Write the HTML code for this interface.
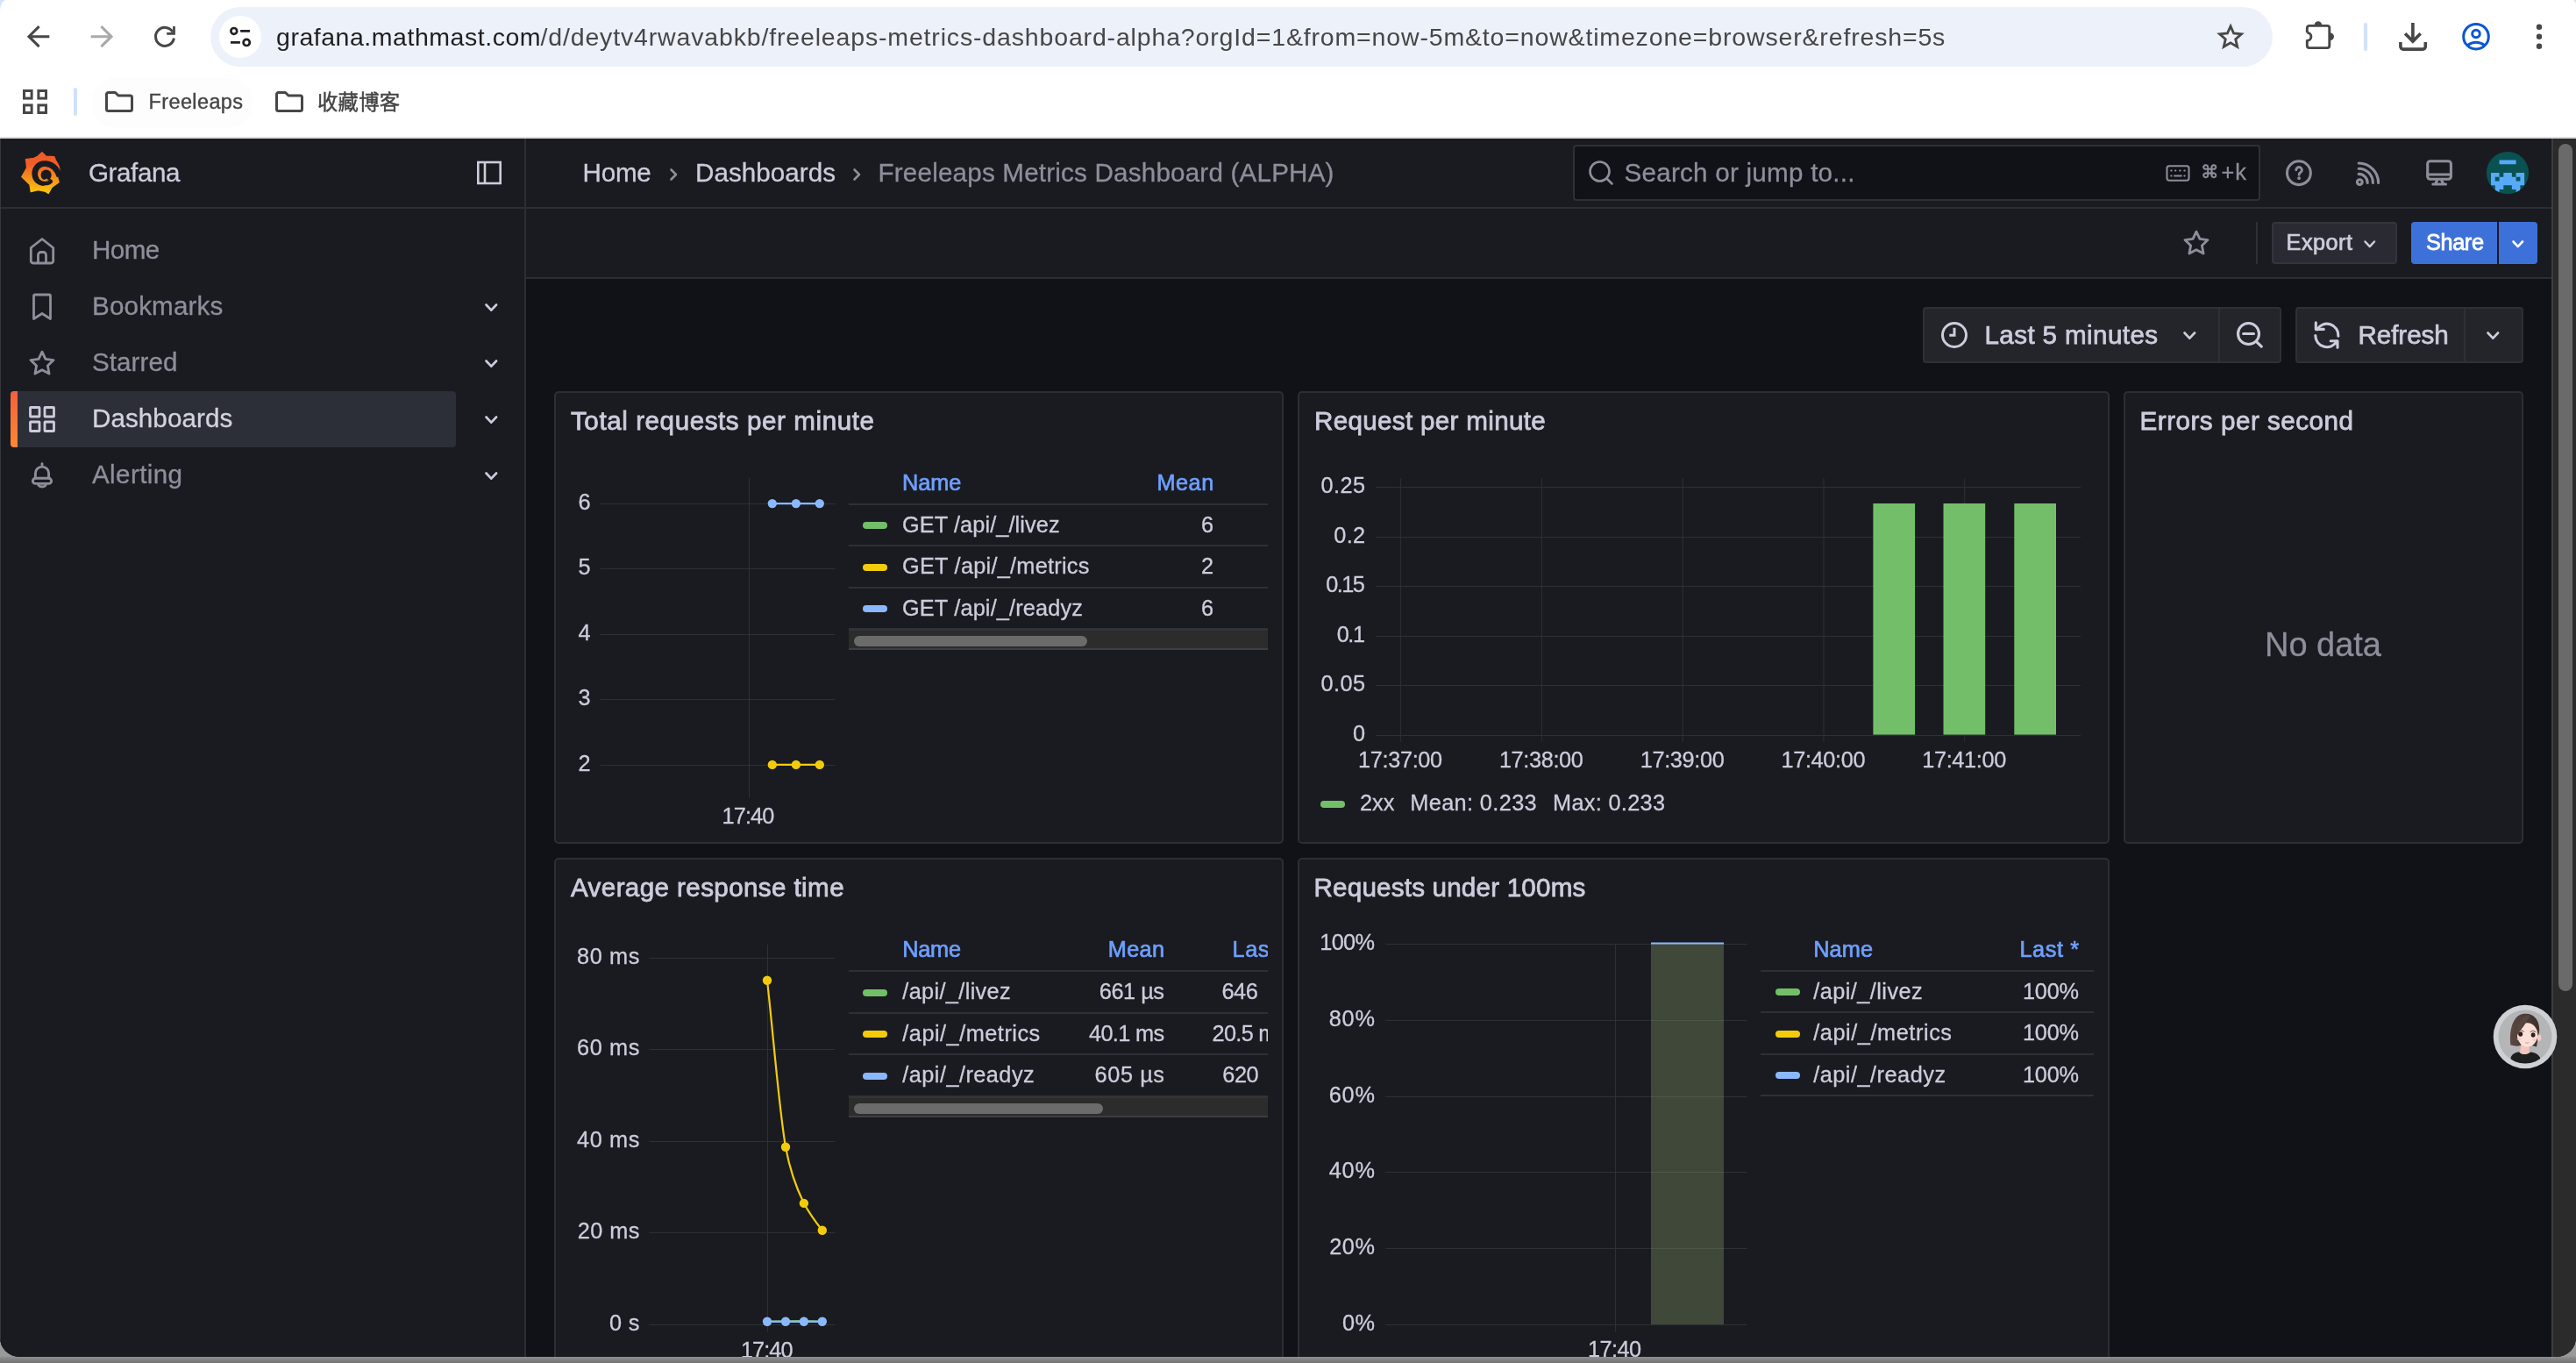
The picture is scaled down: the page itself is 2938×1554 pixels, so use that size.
<!DOCTYPE html>
<html lang="en">
<head>
<meta charset="utf-8">
<title>Freeleaps Metrics Dashboard (ALPHA) - Dashboards - Grafana</title>
<style>

*{box-sizing:border-box;margin:0;padding:0}
html,body{width:2938px;height:1554px;overflow:hidden}
body{background:linear-gradient(#9a9a9a 0,#9a9a9a 1546px,#8a8a8a 1548px,#737373 1554px);font-family:"Liberation Sans", "Noto Sans CJK SC", sans-serif;-webkit-font-smoothing:antialiased}
.t{position:absolute;white-space:pre;display:block}
.abs{position:absolute}
svg{position:absolute;overflow:visible}
#win{will-change:transform;position:absolute;left:0;top:0;width:2938px;height:1547px;overflow:hidden;border-radius:0 0 22px 22px;background:#111217}


#chrome{position:absolute;left:0;top:0;width:2938px;height:158px;background:#fff;border-bottom:2px solid #dcdcdc}
#chrome .corner{position:absolute;left:0;top:0;width:2938px;height:14px;background:#d3e3fd}
#chrome .cornerw{position:absolute;left:0;top:0;width:2938px;height:30px;background:#fff;border-radius:7px 4px 0 0/13px 6px 0 0}
#omni{position:absolute;left:240px;top:8px;width:2352px;height:68px;border-radius:34px;background:#edf1fa}
#omni .site{position:absolute;left:10px;top:10px;width:48px;height:48px;border-radius:24px;background:#fff}
.bsep{position:absolute;width:4px;border-radius:2px;background:#d1e1fc}

#sidebar{position:absolute;left:0;top:158px;width:600px;height:1396px;background:#1a1b20;border-right:2px solid #2d2e35;border-left:1px solid #35373c}
#sidehead{position:absolute;left:0;top:0;width:598px;height:80px;border-bottom:2px solid #2d2e35}
#navsel{position:absolute;left:11px;top:288px;width:508px;height:64px;border-radius:4px;background:#2d2f38;overflow:hidden}
#navsel:before{content:"";position:absolute;left:0;top:0;width:8px;height:64px;background:linear-gradient(#f55f3e,#ff8833)}
#topbar{position:absolute;left:600px;top:158px;width:2310px;height:80px;background:#1a1b20;border-bottom:2px solid #2d2e35}
#toolbar2{position:absolute;left:600px;top:238px;width:2310px;height:80px;background:#1a1b20;border-bottom:2px solid #2d2e35}
#search{position:absolute;left:1794px;top:165px;width:784px;height:64px;border:2px solid #2f3037;border-radius:4px;background:#111217}
.btn{position:absolute;border-radius:4px;background:#24252b;border:2px solid #2f3037}
.vsep{position:absolute;width:2px;background:#2f3037}
#vscroll{position:absolute;left:2910px;top:158px;width:28px;height:1396px;background:#2b2b2b;border-left:2px solid #3d3d3d}
#vscroll i{position:absolute;left:6px;top:6px;width:16px;height:966px;border-radius:8px;background:#6a6a6a}

.panel{position:absolute;background:#1a1b20;border:2px solid #2d2e35;border-radius:5px}
.hl{position:absolute;height:2px;background:#2f3037}
.sw{position:absolute;width:28px;height:8px;border-radius:4px}
.hsb{position:absolute;height:24px;background:#2c2c2c;border-bottom:2px solid #3f3f3f;border-top:2px solid #333437}
.hsb i{position:absolute;left:6px;top:6px;height:12px;border-radius:6px;background:#6b6b6b}

</style>
</head>
<body>
<div id="win">

<div id="chrome">
  <div class="corner"></div><div class="cornerw"></div>
  <!-- back / forward / reload -->
  <svg style="left:28px;top:26px" width="32" height="32" viewBox="0 0 32 32" fill="none" stroke="#474747" stroke-width="3.1" stroke-linejoin="miter">
    <path d="M28.3 15.7H6M16.6 4.2 5 15.7l11.6 11.5"/></svg>
  <svg style="left:100px;top:26px" width="32" height="32" viewBox="0 0 32 32" fill="none" stroke="#a9a9a9" stroke-width="3.1">
    <path d="M3.7 15.7H26M15.4 4.2 27 15.7 15.4 27.2"/></svg>
  <svg style="left:0;top:0" width="240" height="80" viewBox="0 0 240 80" fill="none" stroke="#474747" stroke-width="3">
    <path d="M197 36.400A10.500 10.500 0 1 0 198.400 43.500"/><path d="M198.500 29.900V38.300H190.200" stroke-width="2.800"/></svg>
  <div id="omni"><div class="site"></div>
    <svg style="left:14px;top:14px" width="40" height="40" viewBox="0 0 40 40" fill="none" stroke="#222" stroke-width="2.700">
      <circle cx="12.800" cy="13.400" r="3.400"/><path d="M20.100 13.400H31M9 26.400H19.900"/><circle cx="27.200" cy="26.400" r="3.600"/></svg>
    <!-- bookmark star -->
    <svg style="left:2288px;top:18px" width="32" height="32" viewBox="0 0 24 24" fill="none" stroke="#474747" stroke-width="2.1" stroke-linejoin="miter">
      <path d="M12 2.900l2.700 6.100 6.600.600-5 4.400 1.500 6.500L12 17.100l-5.800 3.400 1.500-6.500-5-4.400 6.600-.600z"/></svg>
  </div>
  <!-- extensions puzzle -->
  <svg style="left:2627px;top:22px" width="38" height="38" viewBox="0 0 38 38" fill="none" stroke="#474747" stroke-width="2.900" stroke-linejoin="round">
    <path d="M4.300 15.200V9.900a2.500 2.500 0 0 1 2.500-2.500H27.300a2.500 2.500 0 0 1 2.500 2.500V30.100a2.500 2.500 0 0 1-2.500 2.500H6.800a2.500 2.500 0 0 1-2.500-2.500V24.400A4.600 4.600 0 0 0 4.300 15.200"/>
    <path stroke="none" fill="#474747" d="M12.700 6.500A4.200 4.200 0 0 1 21.100 6.500ZM30.800 15.600A4.200 4.200 0 0 1 30.800 24Z"/></svg>
  <div class="bsep" style="left:2696px;top:26px;height:32px"></div>
  <!-- download -->
  <svg style="left:2734px;top:24px" width="36" height="36" viewBox="0 0 36 36" fill="none" stroke="#474747" stroke-width="3.600">
    <path d="M17.900 1.900V22M9.100 14.300 17.900 23.100 26.700 14.300M3.900 24.100v5a3 3 0 0 0 3 3h22.400a3 3 0 0 0 3-3v-5"/></svg>
  <!-- profile -->
  <svg style="left:2806px;top:24px" width="36" height="36" viewBox="0 0 36 36" fill="none" stroke="#0b57d0" stroke-width="3">
    <circle cx="18" cy="17.700" r="14.300"/><circle cx="18" cy="14.500" r="4.300"/><path d="M8.500 27.500c5.500-4.300 13.500-4.300 19 0"/></svg>
  <svg style="left:2890px;top:25px" width="12" height="34" viewBox="0 0 12 34" fill="#474747">
    <circle cx="6" cy="5.700" r="3.200"/><circle cx="6" cy="16.700" r="3.200"/><circle cx="6" cy="27.800" r="3.200"/></svg>
  <!-- bookmarks bar -->
  <div class="abs" style="left:104px;top:88px;width:185px;height:58px;border-radius:29px;background:#fdfdfe"></div>
  <svg style="left:26px;top:102px" width="28" height="28" viewBox="0 0 28 28" fill="none" stroke="#474747" stroke-width="3">
    <rect x="1.500" y="1.500" width="8.600" height="8.600"/><rect x="17.900" y="1.500" width="8.600" height="8.600"/>
    <rect x="1.500" y="17.900" width="8.600" height="8.600"/><rect x="17.900" y="17.900" width="8.600" height="8.600"/></svg>
  <div class="bsep" style="left:84px;top:100px;height:32px"></div>
  <svg style="left:120px;top:104px" width="32" height="24" viewBox="0 0 32 24" fill="none" stroke="#474747" stroke-width="3" stroke-linejoin="round">
    <path d="M1.500 3.500a2 2 0 0 1 2-2h8l3.500 3.500h13.500a2 2 0 0 1 2 2v13.500a2 2 0 0 1-2 2h-25a2 2 0 0 1-2-2z"/></svg>
  <svg style="left:314px;top:104px" width="32" height="24" viewBox="0 0 32 24" fill="none" stroke="#474747" stroke-width="3" stroke-linejoin="round">
    <path d="M1.500 3.500a2 2 0 0 1 2-2h8l3.500 3.500h13.500a2 2 0 0 1 2 2v13.500a2 2 0 0 1-2 2h-25a2 2 0 0 1-2-2z"/></svg>
  <span class="t" style="left:315.0px;top:23.5px;font-size:28.5px;line-height:37px;color:#1f1f1f;letter-spacing:0.53px;">grafana.mathmast.com</span>
<span class="t" style="left:616.5px;top:23.5px;font-size:28.5px;line-height:37px;color:#474747;letter-spacing:0.84px;">/d/deytv4rwavabkb/freeleaps-metrics-dashboard-alpha?orgId=1&amp;from=now-5m&amp;to=now&amp;timezone=browser&amp;refresh=5s</span>
<span class="t" style="left:169.5px;top:100.8px;font-size:23.5px;line-height:31px;color:#444444;letter-spacing:0.38px;-webkit-text-stroke:0.35px #444444;">Freeleaps</span>
<span class="t" style="left:362.0px;top:101.5px;font-size:23.3px;line-height:30px;color:#444444;letter-spacing:0.27px;-webkit-text-stroke:0.45px #444444;">收藏博客</span>
</div>


<div id="sidebar">
  <div id="sidehead"></div>
  <div id="navsel"></div>
</div>
<div id="topbar"></div>
<div id="toolbar2"></div>
<div id="search"></div>
<svg style="left:10px;top:160px" width="80" height="70" viewBox="0 0 1558 1363">
<defs><linearGradient id="lg" gradientUnits="userSpaceOnUse" x1="0" y1="250" x2="0" y2="1190"><stop offset="0" stop-color="#f05a28"/><stop offset=".3" stop-color="#f15c27"/><stop offset="1" stop-color="#fccb0a"/></linearGradient></defs>
<path fill="url(#lg)" stroke="url(#lg)" stroke-width="26" stroke-linejoin="round" d="M740 268 822 352 1008 362 1040 445C1100 520 1128 600 1132 697L1078 800 1112 928 958 1040 880 1178 800 1130 650 1100 492 1140 468 985 288 810 402 610 378 422 560 397 640 357Z"/>
<path fill="none" stroke="#1a1b20" stroke-width="128" stroke-linecap="butt" d="M1128 800C1085 670 1000 522 800 516 650 514 576 640 578 745 581 870 670 948 790 950"/>
<path fill="none" stroke="#1a1b20" stroke-width="88" stroke-linecap="round" d="M790 956C850 958 900 945 932 912"/>
<circle cx="830" cy="772" r="118" fill="#1a1b20"/>
<path fill="none" stroke="#1a1b20" stroke-width="46" d="M890 850 930 900"/>
<path fill="none" stroke="#f5901d" stroke-width="34" stroke-linecap="round" d="M690 845C735 895 800 900 848 868"/>
</svg>
<!-- dock toggle -->
<svg style="left:543px;top:183px" width="30" height="28" viewBox="0 0 30 28" fill="none" stroke="#ccccdc" stroke-width="2.600"><rect x="2.300" y="2" width="25.400" height="24"/><path d="M10 2v24"/></svg>
<!-- nav icons -->
<svg style="left:32px;top:269px" width="32" height="34" viewBox="0 0 32 34" fill="none" stroke="#8e8e9b" stroke-width="2.800" stroke-linejoin="round"><path d="M3.300 13.500 16 3.500l12.700 10v15a2.500 2.500 0 0 1-2.500 2.500H5.800a2.500 2.500 0 0 1-2.500-2.500z"/><path d="M11.500 31V21.500a3 3 0 0 1 3-3h3a3 3 0 0 1 3 3V31"/></svg>
<svg style="left:34px;top:333px" width="28" height="34" viewBox="0 0 28 34" fill="none" stroke="#8e8e9b" stroke-width="2.800" stroke-linejoin="round"><path d="M4.500 4.500a1.500 1.500 0 0 1 1.500-1.500h16a1.500 1.500 0 0 1 1.500 1.500v26L14 24.500 4.500 30.500z"/></svg>
<svg style="left:31px;top:397px" width="34" height="34" viewBox="0 0 24 24" fill="none" stroke="#8e8e9b" stroke-width="2" stroke-linejoin="round"><path d="M12 2.900l2.800 5.900 6.400.800-4.700 4.500 1.200 6.400L12 17.400l-5.700 3.100 1.200-6.400L2.800 9.600l6.400-.800z"/></svg>
<svg style="left:32px;top:462px" width="32" height="32" viewBox="0 0 32 32" fill="none" stroke="#ccccdc" stroke-width="2.800"><rect x="2.500" y="2.500" width="10.500" height="10.500" rx=".5"/><rect x="19" y="2.500" width="10.500" height="10.500" rx=".5"/><rect x="2.500" y="19" width="10.500" height="10.500" rx=".5"/><rect x="19" y="19" width="10.500" height="10.500" rx=".5"/></svg>
<svg style="left:33px;top:524px" width="30" height="36" viewBox="0 0 30 36" fill="none" stroke="#8e8e9b" stroke-width="2.900" stroke-linecap="round" stroke-linejoin="round"><path d="M15 4.600v1.900M7.400 21V15.700a7.600 7.600 0 0 1 15.200 0V21"/><rect x="4.400" y="21.300" width="21.200" height="6.100" rx="3"/><path d="M10.900 29.300a4.400 2.700 0 0 0 8.200 0"/></svg>
<svg style="left:552.8px;top:346.4px" width="14.6" height="9.2" viewBox="0 0 14.6 9.2" fill="none" stroke="#ccccdc" stroke-width="2.7" stroke-linecap="round" stroke-linejoin="round"><path d="M1.500 1.500 7.30 7.70 13.10 1.500"/></svg><svg style="left:552.8px;top:410.4px" width="14.6" height="9.2" viewBox="0 0 14.6 9.2" fill="none" stroke="#ccccdc" stroke-width="2.7" stroke-linecap="round" stroke-linejoin="round"><path d="M1.500 1.500 7.30 7.70 13.10 1.500"/></svg><svg style="left:552.8px;top:474.4px" width="14.6" height="9.2" viewBox="0 0 14.6 9.2" fill="none" stroke="#ccccdc" stroke-width="2.7" stroke-linecap="round" stroke-linejoin="round"><path d="M1.500 1.500 7.30 7.70 13.10 1.500"/></svg><svg style="left:552.8px;top:538.4px" width="14.6" height="9.2" viewBox="0 0 14.6 9.2" fill="none" stroke="#ccccdc" stroke-width="2.7" stroke-linecap="round" stroke-linejoin="round"><path d="M1.500 1.500 7.30 7.70 13.10 1.500"/></svg>
<svg style="left:763.0px;top:189.0px" width="12" height="20" viewBox="0 0 12 20" fill="none" stroke="#8e8e9b" stroke-width="2.600" stroke-linecap="round" stroke-linejoin="round"><path d="M2.500 4.500 8 10 2.500 15.500"/></svg><svg style="left:972.0px;top:189.0px" width="12" height="20" viewBox="0 0 12 20" fill="none" stroke="#8e8e9b" stroke-width="2.600" stroke-linecap="round" stroke-linejoin="round"><path d="M2.500 4.500 8 10 2.500 15.500"/></svg>
<!-- search icon / keyboard -->
<svg style="left:1811px;top:182px" width="30" height="30" viewBox="0 0 30 30" fill="none" stroke="#8e8e9b" stroke-width="2.600" stroke-linecap="round"><circle cx="13.500" cy="13.500" r="11"/><path d="M21.500 21.500 27.500 27.500"/></svg>
<svg style="left:2468.500px;top:187.500px" width="30" height="19" viewBox="0 0 32 22" fill="none" stroke="#8e8e9b" stroke-width="2.400" stroke-linecap="round"><rect x="1.500" y="1.500" width="29" height="19" rx="3"/><path d="M7 7.500h.5M12.500 7.500h.500M18.500 7.500h.500M24.500 7.500h.500M7 14.500h.500M11.500 14.500h9M24.500 14.500h.500"/></svg>
<!-- help, rss, monitor -->
<svg style="left:2605px;top:180px" width="34" height="34" viewBox="0 0 34 34" fill="none" stroke="#8e8e9b" stroke-width="3.100" stroke-linecap="round"><circle cx="16.900" cy="17.200" r="13.400"/><path stroke-width="2.900" d="M13.800 13.800a3.300 3.300 0 1 1 5 2.800c-1.300.800-1.700 1.300-1.700 2.600"/><circle cx="17.100" cy="23.200" r="1.900" fill="#8e8e9b" stroke="none"/></svg>
<svg style="left:2685px;top:183px" width="32" height="32" viewBox="0 0 32 32" fill="none" stroke="#8e8e9b" stroke-width="3.100" stroke-linecap="round"><circle cx="6.300" cy="24.600" r="2.900"/><path d="M5.200 15.400A10 10 0 0 1 15.200 25.400M5.200 9.200A16.200 16.200 0 0 1 21.400 25.400M5.200 3A22.400 22.400 0 0 1 27.600 25.400"/></svg>
<svg style="left:2765px;top:180px" width="34" height="34" viewBox="0 0 34 34" fill="none" stroke="#8e8e9b" stroke-width="3.100" stroke-linecap="round" stroke-linejoin="round"><rect x="3.700" y="3.700" width="26.700" height="20.600" rx="3"/><path d="M3.700 19H30.400M14.400 26 12.600 29.600M19.900 26 21.700 29.600M9.800 30H24.500"/></svg>
<svg style="left:0;top:0" width="2938" height="300"><defs><clipPath id="avc"><circle cx="2860" cy="197.100" r="24.100"/></clipPath></defs><circle cx="2860" cy="197.100" r="24.100" fill="#0a5152"/><path clip-path="url(#avc)" fill="#57aaf9" d="M2841.00 196.95h4.77v4.77h-4.77zM2845.77 196.95h4.77v4.77h-4.77zM2855.31 196.95h4.77v4.77h-4.77zM2860.08 196.95h4.77v4.77h-4.77zM2869.62 196.95h4.77v4.77h-4.77zM2874.39 196.95h4.77v4.77h-4.77zM2841.00 201.72h4.77v4.77h-4.77zM2850.54 201.72h4.77v4.77h-4.77zM2855.31 201.72h4.77v4.77h-4.77zM2860.08 201.72h4.77v4.77h-4.77zM2864.85 201.72h4.77v4.77h-4.77zM2874.39 201.72h4.77v4.77h-4.77zM2841.00 206.49h4.77v4.77h-4.77zM2845.77 206.49h4.77v4.77h-4.77zM2850.54 206.49h4.77v4.77h-4.77zM2855.31 206.49h4.77v4.77h-4.77zM2860.08 206.49h4.77v4.77h-4.77zM2864.85 206.49h4.77v4.77h-4.77zM2869.62 206.49h4.77v4.77h-4.77zM2874.39 206.49h4.77v4.77h-4.77zM2845.77 211.26h4.77v4.77h-4.77zM2850.54 211.26h4.77v4.77h-4.77zM2864.85 211.26h4.77v4.77h-4.77zM2869.62 211.26h4.77v4.77h-4.77zM2845.77 216.03h4.77v4.77h-4.77zM2869.62 216.03h4.77v4.77h-4.77zM2850.54 182.60h19.08v4.77h-19.08z"/></svg>
<!-- toolbar 2 -->
<svg style="left:2488px;top:260px" width="34" height="34" viewBox="0 0 24 24" fill="none" stroke="#8e8e9b" stroke-width="2" stroke-linejoin="round"><path d="M12 2.900l2.800 5.900 6.400.800-4.700 4.500 1.200 6.400L12 17.400l-5.700 3.100 1.200-6.400L2.800 9.600l6.400-.800z"/></svg>
<div class="vsep" style="left:2573px;top:253px;height:48px"></div>
<div class="btn" style="left:2591px;top:253px;width:143px;height:48px;background:#2a2b32;border-color:#34353c"></div>
<svg style="left:2696.0px;top:273.7px" width="13.5" height="8.6" viewBox="0 0 13.5 8.6" fill="none" stroke="#ccccdc" stroke-width="2.5" stroke-linecap="round" stroke-linejoin="round"><path d="M1.500 1.500 6.75 7.10 12.00 1.500"/></svg>
<div class="abs" style="left:2750px;top:253px;width:98px;height:48px;border-radius:4px 0 0 4px;background:#3d71d9"></div>
<div class="abs" style="left:2850px;top:253px;width:44px;height:48px;border-radius:0 4px 4px 0;background:#3d71d9"></div>
<svg style="left:2864.5px;top:273.7px" width="13.5" height="8.6" viewBox="0 0 13.5 8.6" fill="none" stroke="#ffffff" stroke-width="2.6" stroke-linecap="round" stroke-linejoin="round"><path d="M1.500 1.500 6.75 7.10 12.00 1.500"/></svg>
<!-- time controls -->
<div class="btn" style="left:2193px;top:350px;width:409px;height:64px"></div>
<div class="vsep" style="left:2530px;top:352px;height:60px"></div>
<svg style="left:2212px;top:365px" width="34" height="34" viewBox="0 0 34 34" fill="none" stroke="#ccccdc" stroke-width="3"><circle cx="17" cy="17" r="13.500"/><path d="M17 8.800V17.300H11.300"/></svg>
<svg style="left:2489.5px;top:377.6px" width="14.6" height="9.2" viewBox="0 0 14.6 9.2" fill="none" stroke="#ccccdc" stroke-width="2.7" stroke-linecap="round" stroke-linejoin="round"><path d="M1.500 1.500 7.30 7.70 13.10 1.500"/></svg>
<svg style="left:2549px;top:365px" width="34" height="34" viewBox="0 0 34 34" fill="none" stroke="#ccccdc" stroke-width="3.100" stroke-linecap="round"><circle cx="15.500" cy="15.500" r="12"/><path d="M24.300 24.300 30.300 30.200M9.600 15.500H21.500"/></svg>
<div class="btn" style="left:2618px;top:350px;width:260px;height:64px"></div>
<div class="vsep" style="left:2810px;top:352px;height:60px"></div>
<svg style="left:2637px;top:365px" width="34" height="34" viewBox="0 0 34 34" fill="none" stroke="#ccccdc" stroke-width="3.100" stroke-linecap="round" stroke-linejoin="round"><path d="M5.600 10.800A13 13 0 0 1 29.900 18.100M4.300 2.900V10.400H13.300M3.800 17.500A13 13 0 0 0 28.400 23.600M21.200 23.800H29V31.300"/></svg>
<svg style="left:2835.5px;top:377.6px" width="14.6" height="9.2" viewBox="0 0 14.6 9.2" fill="none" stroke="#ccccdc" stroke-width="2.7" stroke-linecap="round" stroke-linejoin="round"><path d="M1.500 1.500 7.30 7.70 13.10 1.500"/></svg>
<div id="vscroll"><i></i></div>
<svg style="left:2843px;top:1145px" width="74" height="74" viewBox="0 0 74 74">
<defs><clipPath id="fc"><circle cx="37" cy="37" r="30.500"/></clipPath>
<linearGradient id="hg" x1="0" y1="0" x2="1" y2="0"><stop offset="0" stop-color="#5a4741"/><stop offset="1" stop-color="#3f302d"/></linearGradient></defs>
<circle cx="37" cy="37" r="36.300" fill="#cfd0d3"/><circle cx="37" cy="37" r="30.500" fill="#b4b5b7"/>
<g clip-path="url(#fc)">
<path d="M20.400 46.500C18.500 30 23 12 35.500 10.800 47 9.500 53.500 18 53.200 30L50 48.500 41 46 27 47.800Z" fill="url(#hg)"/>
<path d="M32.300 45h9l.800 10c-3 3.500-8.500 3.500-11 0z" fill="#f2c6ba"/>
<ellipse cx="39.600" cy="34.800" rx="11.700" ry="13.600" fill="#fbe0d8"/>
<path d="M42.700 12.500C36 11 25.500 20 26.300 42 27 33.500 32.500 29.500 36 24 38.500 20 41 16 42.700 12.500Z" fill="#554640"/>
<path d="M42.700 12.500C48 14 52 20 52.600 33 51 27 47 20.500 42.700 12.500Z" fill="#43332f"/>
<ellipse cx="53.100" cy="38.200" rx="2.300" ry="3.800" fill="#f4cbbf"/>
<ellipse cx="31.700" cy="34" rx="2.500" ry="2.700" fill="#2e1e1c"/><ellipse cx="46.100" cy="35" rx="2.400" ry="2.700" fill="#2e1e1c"/>
<path d="M27.800 31.200c2.500-2 5.500-2 8 .200M42.500 31.800c2.500-2 5-1.800 7 .200" stroke="#5a4741" stroke-width="1" fill="none"/>
<ellipse cx="30" cy="39.500" rx="2.600" ry="1.600" fill="#f6c3ba" opacity=".7"/><ellipse cx="47.500" cy="40.300" rx="2.400" ry="1.600" fill="#f6c3ba" opacity=".7"/>
<path d="M36.600 43c1.700.900 3.700.900 5.400 0-1 2.200-4.400 2.200-5.400 0z" fill="#e08f84"/>
<path d="M20.500 61c1.500-4.500 5-5.800 9.200-6.800 3.500 3.800 9.500 3.800 13.200.200 4.500.600 9 1.600 11.300 6.800L52 70H22Z" fill="#1c1e1f"/>
</g></svg>
<span class="t" style="left:101.0px;top:177.7px;font-size:29.6px;line-height:38px;color:#ccccdc;letter-spacing:-0.41px;-webkit-text-stroke:0.3px #ccccdc;">Grafana</span>
<span class="t" style="left:105.0px;top:266.2px;font-size:29.6px;line-height:38px;color:#8e8e9b;letter-spacing:-0.55px;-webkit-text-stroke:0.3px #8e8e9b;">Home</span>
<span class="t" style="left:105.0px;top:330.2px;font-size:29.6px;line-height:38px;color:#8e8e9b;letter-spacing:0.16px;-webkit-text-stroke:0.3px #8e8e9b;">Bookmarks</span>
<span class="t" style="left:105.0px;top:394.2px;font-size:29.6px;line-height:38px;color:#8e8e9b;letter-spacing:0.06px;-webkit-text-stroke:0.3px #8e8e9b;">Starred</span>
<span class="t" style="left:105.0px;top:458.2px;font-size:29.6px;line-height:38px;color:#d2d2e0;letter-spacing:0.07px;-webkit-text-stroke:0.3px #d2d2e0;">Dashboards</span>
<span class="t" style="left:105.0px;top:522.2px;font-size:29.6px;line-height:38px;color:#8e8e9b;letter-spacing:0.38px;-webkit-text-stroke:0.3px #8e8e9b;">Alerting</span>
<span class="t" style="left:664.5px;top:177.7px;font-size:29.6px;line-height:38px;color:#ccccdc;letter-spacing:-0.22px;-webkit-text-stroke:0.3px #ccccdc;">Home</span>
<span class="t" style="left:793.0px;top:177.7px;font-size:29.6px;line-height:38px;color:#ccccdc;letter-spacing:0.05px;-webkit-text-stroke:0.3px #ccccdc;">Dashboards</span>
<span class="t" style="left:1001.5px;top:177.7px;font-size:29.6px;line-height:38px;color:#8e8e9b;letter-spacing:0.20px;-webkit-text-stroke:0.3px #8e8e9b;">Freeleaps Metrics Dashboard (ALPHA)</span>
<span class="t" style="left:1852.5px;top:177.7px;font-size:29.6px;line-height:38px;color:#8e8e9b;letter-spacing:0.25px;-webkit-text-stroke:0.3px #8e8e9b;">Search or jump to...</span>
<span class="t" style="left:2510.0px;top:183.2px;font-size:20.5px;line-height:27px;color:#8e8e9b;-webkit-text-stroke:0.5px #8e8e9b;font-family:'DejaVu Sans', sans-serif;">⌘</span>
<span class="t" style="left:2533.5px;top:180.2px;font-size:25.3px;line-height:33px;color:#8e8e9b;letter-spacing:1.08px;-webkit-text-stroke:0.3px #8e8e9b;">+k</span>
<span class="t" style="left:2607.6px;top:259.7px;font-size:25.3px;line-height:33px;color:#ccccdc;letter-spacing:0.46px;-webkit-text-stroke:0.7px #ccccdc;">Export</span>
<span class="t" style="left:2767.0px;top:259.7px;font-size:25.3px;line-height:33px;color:#ffffff;letter-spacing:-0.38px;-webkit-text-stroke:0.8px #ffffff;">Share</span>
<span class="t" style="left:2263.5px;top:363.1px;font-size:29.6px;line-height:38px;color:#ccccdc;letter-spacing:0.39px;-webkit-text-stroke:0.75px #ccccdc;">Last 5 minutes</span>
<span class="t" style="left:2689.5px;top:363.1px;font-size:29.6px;line-height:38px;color:#ccccdc;letter-spacing:-0.07px;-webkit-text-stroke:0.75px #ccccdc;">Refresh</span>


<div class="panel" style="left:632px;top:446px;width:832px;height:516px"></div>
<div class="panel" style="left:1480px;top:446px;width:926px;height:516px"></div>
<div class="panel" style="left:2422px;top:446px;width:456px;height:516px"></div>
<div class="panel" style="left:632px;top:978px;width:832px;height:620px"></div>
<div class="panel" style="left:1480px;top:978px;width:926px;height:620px"></div>
<svg style="left:0;top:0" width="2938" height="1554" viewBox="0 0 2938 1554" fill="none">
<path d="M684.5 574.5H952.5" stroke="#2d3035" stroke-width="1"/>
<path d="M684.5 648.5H952.5" stroke="#2d3035" stroke-width="1"/>
<path d="M684.5 723.5H952.5" stroke="#2d3035" stroke-width="1"/>
<path d="M684.5 797.5H952.5" stroke="#2d3035" stroke-width="1"/>
<path d="M684.5 872.5H952.5" stroke="#2d3035" stroke-width="1"/>
<path d="M854.5 544.5V909.5" stroke="#2d3035" stroke-width="1"/>
<path d="M880.8 574.1 907.9 574.1 934.8 574.1" fill="none" stroke="#8ab8ff" stroke-width="2.2"/>
<circle cx="880.8" cy="574.1" r="5.2" fill="#8ab8ff"/>
<circle cx="907.9" cy="574.1" r="5.2" fill="#8ab8ff"/>
<circle cx="934.8" cy="574.1" r="5.2" fill="#8ab8ff"/>
<path d="M880.8 871.9 907.9 871.9 934.8 871.9" fill="none" stroke="#f2cc0c" stroke-width="2.2"/>
<circle cx="880.8" cy="871.9" r="5.2" fill="#f2cc0c"/>
<circle cx="907.9" cy="871.9" r="5.2" fill="#f2cc0c"/>
<circle cx="934.8" cy="871.9" r="5.2" fill="#f2cc0c"/>
<path d="M1569.0 555.5H2373.0" stroke="#2d3035" stroke-width="1"/>
<path d="M1569.0 612.5H2373.0" stroke="#2d3035" stroke-width="1"/>
<path d="M1569.0 668.5H2373.0" stroke="#2d3035" stroke-width="1"/>
<path d="M1569.0 725.5H2373.0" stroke="#2d3035" stroke-width="1"/>
<path d="M1569.0 781.5H2373.0" stroke="#2d3035" stroke-width="1"/>
<path d="M1569.0 838.5H2373.0" stroke="#2d3035" stroke-width="1"/>
<path d="M1597.6 545.0V846.0" stroke="#2d3035" stroke-width="1"/>
<path d="M1758.4 545.0V846.0" stroke="#2d3035" stroke-width="1"/>
<path d="M1919.2 545.0V846.0" stroke="#2d3035" stroke-width="1"/>
<path d="M2080.0 545.0V846.0" stroke="#2d3035" stroke-width="1"/>
<path d="M2240.7 545.0V846.0" stroke="#2d3035" stroke-width="1"/>
<rect x="2136.4" y="574" width="47.700" height="263.600" fill="#73bf69"/>
<rect x="2216.5" y="574" width="47.700" height="263.600" fill="#73bf69"/>
<rect x="2297.3" y="574" width="47.700" height="263.600" fill="#73bf69"/>
<path d="M740.5 1092.5H952.5" stroke="#2d3035" stroke-width="1"/>
<path d="M740.5 1196.5H952.5" stroke="#2d3035" stroke-width="1"/>
<path d="M740.5 1301.5H952.5" stroke="#2d3035" stroke-width="1"/>
<path d="M740.5 1405.5H952.5" stroke="#2d3035" stroke-width="1"/>
<path d="M740.5 1510.5H952.5" stroke="#2d3035" stroke-width="1"/>
<path d="M875.5 1077.0V1518.5" stroke="#2d3035" stroke-width="1"/>
<path d="M875 1117.8C882 1180 888 1260 896 1307.8 901 1335 909 1356 916.9 1371.9 924 1385 931 1394 937.8 1402.8" fill="none" stroke="#f2cc0c" stroke-width="2.2"/>
<circle cx="875.0" cy="1117.8" r="5.2" fill="#f2cc0c"/>
<circle cx="896.0" cy="1307.8" r="5.2" fill="#f2cc0c"/>
<circle cx="916.9" cy="1371.9" r="5.2" fill="#f2cc0c"/>
<circle cx="937.8" cy="1402.8" r="5.2" fill="#f2cc0c"/>
<path d="M875.0 1506.6 896.0 1506.3 916.9 1506.2 937.8 1506.6" fill="none" stroke="#73bf69" stroke-width="2.2"/>
<circle cx="875.0" cy="1506.6" r="4.5" fill="#73bf69"/>
<circle cx="896.0" cy="1506.3" r="4.5" fill="#73bf69"/>
<circle cx="916.9" cy="1506.2" r="4.5" fill="#73bf69"/>
<circle cx="937.8" cy="1506.6" r="4.5" fill="#73bf69"/>
<path d="M875.0 1506.8 896.0 1506.8 916.9 1506.8 937.8 1506.8" fill="none" stroke="#8ab8ff" stroke-width="2.2"/>
<circle cx="875.0" cy="1506.8" r="5.2" fill="#8ab8ff"/>
<circle cx="896.0" cy="1506.8" r="5.2" fill="#8ab8ff"/>
<circle cx="916.9" cy="1506.8" r="5.2" fill="#8ab8ff"/>
<circle cx="937.8" cy="1506.8" r="5.2" fill="#8ab8ff"/>
<path d="M1580.5 1076.5H1992.5" stroke="#2d3035" stroke-width="1"/>
<path d="M1580.5 1163.5H1992.5" stroke="#2d3035" stroke-width="1"/>
<path d="M1580.5 1250.5H1992.5" stroke="#2d3035" stroke-width="1"/>
<path d="M1580.5 1336.5H1992.5" stroke="#2d3035" stroke-width="1"/>
<path d="M1580.5 1423.5H1992.5" stroke="#2d3035" stroke-width="1"/>
<path d="M1580.5 1510.5H1992.5" stroke="#2d3035" stroke-width="1"/>
<path d="M1842.5 1076.0V1518.5" stroke="#2d3035" stroke-width="1"/>
<rect x="1883" y="1075.500" width="83" height="434.500" fill="#73bf69" fill-opacity=".1"/>
<rect x="1883" y="1075.500" width="83" height="434.500" fill="#f2cc0c" fill-opacity=".1"/>
<rect x="1883" y="1075.500" width="83" height="434.500" fill="#8ab8ff" fill-opacity=".1"/>
<path d="M1883 1075.500H1966" stroke="#8ab8ff" stroke-width="2.200"/>
</svg>
<div class="hl" style="left:968.0px;top:573.7px;width:478.0px"></div>
<div class="sw" style="left:984.0px;top:595.1px;background:#73bf69"></div>
<div class="hl" style="left:968.0px;top:621.2px;width:478.0px"></div>
<div class="sw" style="left:984.0px;top:642.6px;background:#f2cc0c"></div>
<div class="hl" style="left:968.0px;top:668.7px;width:478.0px"></div>
<div class="sw" style="left:984.0px;top:690.1px;background:#8ab8ff"></div>
<div class="hl" style="left:968.0px;top:716.2px;width:478.0px"></div>
<div class="hsb" style="left:968.0px;top:717.0px;width:478.0px"><i style="width:266.0px"></i></div>
<div class="sw" style="left:1506.400px;top:912.500px;background:#73bf69"></div>
<div class="hl" style="left:968.0px;top:1106.3px;width:478.0px"></div>
<div class="sw" style="left:984.0px;top:1127.7px;background:#73bf69"></div>
<div class="hl" style="left:968.0px;top:1153.8px;width:478.0px"></div>
<div class="sw" style="left:984.0px;top:1175.2px;background:#f2cc0c"></div>
<div class="hl" style="left:968.0px;top:1201.3px;width:478.0px"></div>
<div class="sw" style="left:984.0px;top:1222.7px;background:#8ab8ff"></div>
<div class="hl" style="left:968.0px;top:1248.8px;width:478.0px"></div>
<div class="hsb" style="left:968.0px;top:1249.6px;width:478.0px"><i style="width:283.5px"></i></div>
<div class="hl" style="left:2008.0px;top:1105.8px;width:380.0px"></div>
<div class="sw" style="left:2024.5px;top:1127.2px;background:#73bf69"></div>
<div class="hl" style="left:2008.0px;top:1153.3px;width:380.0px"></div>
<div class="sw" style="left:2024.5px;top:1174.7px;background:#f2cc0c"></div>
<div class="hl" style="left:2008.0px;top:1200.8px;width:380.0px"></div>
<div class="sw" style="left:2024.5px;top:1222.2px;background:#8ab8ff"></div>
<div class="hl" style="left:2008.0px;top:1248.3px;width:380.0px"></div>
<span class="t" style="left:651.0px;top:461.2px;font-size:29.6px;line-height:38px;color:#ccccdc;letter-spacing:0.57px;-webkit-text-stroke:0.8px #ccccdc;">Total requests per minute</span>
<span class="t" style="left:1499.0px;top:461.2px;font-size:29.6px;line-height:38px;color:#ccccdc;letter-spacing:0.32px;-webkit-text-stroke:0.8px #ccccdc;">Request per minute</span>
<span class="t" style="left:2440.5px;top:461.2px;font-size:29.6px;line-height:38px;color:#ccccdc;letter-spacing:0.52px;-webkit-text-stroke:0.8px #ccccdc;">Errors per second</span>
<span class="t" style="left:651.0px;top:993.2px;font-size:29.6px;line-height:38px;color:#ccccdc;letter-spacing:0.39px;-webkit-text-stroke:0.8px #ccccdc;">Average response time</span>
<span class="t" style="left:1498.5px;top:993.2px;font-size:29.6px;line-height:38px;color:#ccccdc;letter-spacing:0.20px;-webkit-text-stroke:0.8px #ccccdc;">Requests under 100ms</span>
<span class="t" style="left:2583.0px;top:711.2px;font-size:38px;line-height:49px;color:#8e8e9b;letter-spacing:-0.02px;-webkit-text-stroke:0.3px #8e8e9b;">No data</span>
<span class="t" style="left:659.4px;top:556.4px;font-size:25.3px;line-height:33px;color:#ccccdc;-webkit-text-stroke:0.3px #ccccdc;">6</span>
<span class="t" style="left:659.4px;top:630.4px;font-size:25.3px;line-height:33px;color:#ccccdc;-webkit-text-stroke:0.3px #ccccdc;">5</span>
<span class="t" style="left:659.4px;top:705.4px;font-size:25.3px;line-height:33px;color:#ccccdc;-webkit-text-stroke:0.3px #ccccdc;">4</span>
<span class="t" style="left:659.4px;top:779.4px;font-size:25.3px;line-height:33px;color:#ccccdc;-webkit-text-stroke:0.3px #ccccdc;">3</span>
<span class="t" style="left:659.4px;top:854.4px;font-size:25.3px;line-height:33px;color:#ccccdc;-webkit-text-stroke:0.3px #ccccdc;">2</span>
<span class="t" style="left:823.5px;top:913.8px;font-size:25.3px;line-height:33px;color:#ccccdc;letter-spacing:-0.85px;-webkit-text-stroke:0.3px #ccccdc;">17:40</span>
<span class="t" style="left:1029.0px;top:533.6px;font-size:25.3px;line-height:33px;color:#6e9fff;letter-spacing:-0.03px;-webkit-text-stroke:0.7px #6e9fff;">Name</span>
<span class="t" style="left:1319.4px;top:533.6px;font-size:25.3px;line-height:33px;color:#6e9fff;letter-spacing:0.51px;-webkit-text-stroke:0.7px #6e9fff;">Mean</span>
<span class="t" style="left:1029.0px;top:581.8px;font-size:25.3px;line-height:33px;color:#ccccdc;letter-spacing:0.10px;-webkit-text-stroke:0.3px #ccccdc;">GET /api/_/livez</span>
<span class="t" style="left:1370.1px;top:581.8px;font-size:25.3px;line-height:33px;color:#ccccdc;-webkit-text-stroke:0.3px #ccccdc;">6</span>
<span class="t" style="left:1029.0px;top:629.3px;font-size:25.3px;line-height:33px;color:#ccccdc;letter-spacing:0.26px;-webkit-text-stroke:0.3px #ccccdc;">GET /api/_/metrics</span>
<span class="t" style="left:1370.1px;top:629.3px;font-size:25.3px;line-height:33px;color:#ccccdc;-webkit-text-stroke:0.3px #ccccdc;">2</span>
<span class="t" style="left:1029.0px;top:676.8px;font-size:25.3px;line-height:33px;color:#ccccdc;letter-spacing:0.16px;-webkit-text-stroke:0.3px #ccccdc;">GET /api/_/readyz</span>
<span class="t" style="left:1370.1px;top:676.8px;font-size:25.3px;line-height:33px;color:#ccccdc;-webkit-text-stroke:0.3px #ccccdc;">6</span>
<span class="t" style="left:1506.4px;top:536.9px;font-size:25.3px;line-height:33px;color:#ccccdc;letter-spacing:0.45px;-webkit-text-stroke:0.3px #ccccdc;">0.25</span>
<span class="t" style="left:1521.3px;top:593.9px;font-size:25.3px;line-height:33px;color:#ccccdc;letter-spacing:0.26px;-webkit-text-stroke:0.3px #ccccdc;">0.2</span>
<span class="t" style="left:1512.2px;top:649.9px;font-size:25.3px;line-height:33px;color:#ccccdc;letter-spacing:-1.50px;-webkit-text-stroke:0.3px #ccccdc;">0.15</span>
<span class="t" style="left:1524.8px;top:706.9px;font-size:25.3px;line-height:33px;color:#ccccdc;letter-spacing:-1.50px;-webkit-text-stroke:0.3px #ccccdc;">0.1</span>
<span class="t" style="left:1506.4px;top:762.9px;font-size:25.3px;line-height:33px;color:#ccccdc;letter-spacing:0.45px;-webkit-text-stroke:0.3px #ccccdc;">0.05</span>
<span class="t" style="left:1542.9px;top:819.9px;font-size:25.3px;line-height:33px;color:#ccccdc;-webkit-text-stroke:0.3px #ccccdc;">0</span>
<span class="t" style="left:1549.1px;top:849.8px;font-size:25.3px;line-height:33px;color:#ccccdc;letter-spacing:-0.35px;-webkit-text-stroke:0.3px #ccccdc;">17:37:00</span>
<span class="t" style="left:1709.9px;top:849.8px;font-size:25.3px;line-height:33px;color:#ccccdc;letter-spacing:-0.35px;-webkit-text-stroke:0.3px #ccccdc;">17:38:00</span>
<span class="t" style="left:1870.7px;top:849.8px;font-size:25.3px;line-height:33px;color:#ccccdc;letter-spacing:-0.35px;-webkit-text-stroke:0.3px #ccccdc;">17:39:00</span>
<span class="t" style="left:2031.5px;top:849.8px;font-size:25.3px;line-height:33px;color:#ccccdc;letter-spacing:-0.35px;-webkit-text-stroke:0.3px #ccccdc;">17:40:00</span>
<span class="t" style="left:2192.2px;top:849.8px;font-size:25.3px;line-height:33px;color:#ccccdc;letter-spacing:-0.35px;-webkit-text-stroke:0.3px #ccccdc;">17:41:00</span>
<span class="t" style="left:1551.0px;top:899.0px;font-size:25.3px;line-height:33px;color:#ccccdc;letter-spacing:-0.04px;-webkit-text-stroke:0.3px #ccccdc;">2xx</span>
<span class="t" style="left:1608.3px;top:899.0px;font-size:25.3px;line-height:33px;color:#ccccdc;letter-spacing:0.37px;-webkit-text-stroke:0.3px #ccccdc;">Mean: 0.233</span>
<span class="t" style="left:1771.0px;top:899.0px;font-size:25.3px;line-height:33px;color:#ccccdc;letter-spacing:0.32px;-webkit-text-stroke:0.3px #ccccdc;">Max: 0.233</span>
<span class="t" style="left:658.0px;top:1074.2px;font-size:25.3px;line-height:33px;color:#ccccdc;letter-spacing:0.60px;-webkit-text-stroke:0.3px #ccccdc;">80 ms</span>
<span class="t" style="left:658.0px;top:1178.2px;font-size:25.3px;line-height:33px;color:#ccccdc;letter-spacing:0.60px;-webkit-text-stroke:0.3px #ccccdc;">60 ms</span>
<span class="t" style="left:658.0px;top:1283.2px;font-size:25.3px;line-height:33px;color:#ccccdc;letter-spacing:0.60px;-webkit-text-stroke:0.3px #ccccdc;">40 ms</span>
<span class="t" style="left:658.8px;top:1387.2px;font-size:25.3px;line-height:33px;color:#ccccdc;letter-spacing:0.40px;-webkit-text-stroke:0.3px #ccccdc;">20 ms</span>
<span class="t" style="left:695.0px;top:1492.2px;font-size:25.3px;line-height:33px;color:#ccccdc;letter-spacing:0.27px;-webkit-text-stroke:0.3px #ccccdc;">0 s</span>
<span class="t" style="left:845.0px;top:1522.9px;font-size:25.3px;line-height:33px;color:#ccccdc;letter-spacing:-0.95px;-webkit-text-stroke:0.3px #ccccdc;">17:40</span>
<span class="t" style="left:1029.3px;top:1066.2px;font-size:25.3px;line-height:33px;color:#6e9fff;letter-spacing:-0.26px;-webkit-text-stroke:0.7px #6e9fff;">Name</span>
<span class="t" style="left:1263.8px;top:1066.2px;font-size:25.3px;line-height:33px;color:#6e9fff;letter-spacing:0.31px;-webkit-text-stroke:0.7px #6e9fff;">Mean</span>
<span class="t" style="left:1029.3px;top:1114.4px;font-size:25.3px;line-height:33px;color:#ccccdc;letter-spacing:0.35px;-webkit-text-stroke:0.3px #ccccdc;">/api/_/livez</span>
<span class="t" style="left:1253.8px;top:1114.4px;font-size:25.3px;line-height:33px;color:#ccccdc;letter-spacing:-0.45px;-webkit-text-stroke:0.3px #ccccdc;">661 µs</span>
<span class="t" style="left:1029.3px;top:1161.9px;font-size:25.3px;line-height:33px;color:#ccccdc;letter-spacing:0.50px;-webkit-text-stroke:0.3px #ccccdc;">/api/_/metrics</span>
<span class="t" style="left:1242.0px;top:1161.9px;font-size:25.3px;line-height:33px;color:#ccccdc;letter-spacing:-0.66px;-webkit-text-stroke:0.3px #ccccdc;">40.1 ms</span>
<span class="t" style="left:1029.3px;top:1209.4px;font-size:25.3px;line-height:33px;color:#ccccdc;letter-spacing:0.46px;-webkit-text-stroke:0.3px #ccccdc;">/api/_/readyz</span>
<span class="t" style="left:1248.6px;top:1209.4px;font-size:25.3px;line-height:33px;color:#ccccdc;letter-spacing:0.59px;-webkit-text-stroke:0.3px #ccccdc;">605 µs</span>
<span class="t" style="left:1405.5px;top:1066.2px;font-size:25.3px;line-height:33px;color:#6e9fff;letter-spacing:0.56px;-webkit-text-stroke:0.55px #6e9fff;width:40.5px;overflow:hidden;">Last *</span>
<span class="t" style="left:1393.5px;top:1114.4px;font-size:25.3px;line-height:33px;color:#ccccdc;letter-spacing:-0.49px;-webkit-text-stroke:0.3px #ccccdc;width:47.0px;overflow:hidden;">646 µs</span>
<span class="t" style="left:1382.5px;top:1161.9px;font-size:25.3px;line-height:33px;color:#ccccdc;letter-spacing:-0.68px;-webkit-text-stroke:0.3px #ccccdc;width:63.5px;overflow:hidden;">20.5 ms</span>
<span class="t" style="left:1394.3px;top:1209.4px;font-size:25.3px;line-height:33px;color:#ccccdc;letter-spacing:-0.49px;-webkit-text-stroke:0.3px #ccccdc;width:46.5px;overflow:hidden;">620 µs</span>
<span class="t" style="left:1505.3px;top:1058.1px;font-size:25.3px;line-height:33px;color:#ccccdc;letter-spacing:-0.67px;-webkit-text-stroke:0.3px #ccccdc;">100%</span>
<span class="t" style="left:1515.7px;top:1145.1px;font-size:25.3px;line-height:33px;color:#ccccdc;letter-spacing:0.83px;-webkit-text-stroke:0.3px #ccccdc;">80%</span>
<span class="t" style="left:1515.7px;top:1232.1px;font-size:25.3px;line-height:33px;color:#ccccdc;letter-spacing:0.83px;-webkit-text-stroke:0.3px #ccccdc;">60%</span>
<span class="t" style="left:1515.7px;top:1318.1px;font-size:25.3px;line-height:33px;color:#ccccdc;letter-spacing:0.83px;-webkit-text-stroke:0.3px #ccccdc;">40%</span>
<span class="t" style="left:1516.2px;top:1405.1px;font-size:25.3px;line-height:33px;color:#ccccdc;letter-spacing:0.58px;-webkit-text-stroke:0.3px #ccccdc;">20%</span>
<span class="t" style="left:1531.1px;top:1492.1px;font-size:25.3px;line-height:33px;color:#ccccdc;letter-spacing:0.34px;-webkit-text-stroke:0.3px #ccccdc;">0%</span>
<span class="t" style="left:1811.0px;top:1522.0px;font-size:25.3px;line-height:33px;color:#ccccdc;letter-spacing:-0.58px;-webkit-text-stroke:0.3px #ccccdc;">17:40</span>
<span class="t" style="left:2068.2px;top:1065.7px;font-size:25.3px;line-height:33px;color:#6e9fff;letter-spacing:0.11px;-webkit-text-stroke:0.7px #6e9fff;">Name</span>
<span class="t" style="left:2303.4px;top:1065.7px;font-size:25.3px;line-height:33px;color:#6e9fff;letter-spacing:0.58px;-webkit-text-stroke:0.7px #6e9fff;">Last *</span>
<span class="t" style="left:2068.2px;top:1113.9px;font-size:25.3px;line-height:33px;color:#ccccdc;letter-spacing:0.45px;-webkit-text-stroke:0.3px #ccccdc;">/api/_/livez</span>
<span class="t" style="left:2306.9px;top:1113.9px;font-size:25.3px;line-height:33px;color:#ccccdc;letter-spacing:-0.20px;-webkit-text-stroke:0.3px #ccccdc;">100%</span>
<span class="t" style="left:2068.2px;top:1161.4px;font-size:25.3px;line-height:33px;color:#ccccdc;letter-spacing:0.57px;-webkit-text-stroke:0.3px #ccccdc;">/api/_/metrics</span>
<span class="t" style="left:2306.9px;top:1161.4px;font-size:25.3px;line-height:33px;color:#ccccdc;letter-spacing:-0.20px;-webkit-text-stroke:0.3px #ccccdc;">100%</span>
<span class="t" style="left:2068.2px;top:1208.9px;font-size:25.3px;line-height:33px;color:#ccccdc;letter-spacing:0.50px;-webkit-text-stroke:0.3px #ccccdc;">/api/_/readyz</span>
<span class="t" style="left:2306.9px;top:1208.9px;font-size:25.3px;line-height:33px;color:#ccccdc;letter-spacing:-0.20px;-webkit-text-stroke:0.3px #ccccdc;">100%</span>

</div>
</body></html>
